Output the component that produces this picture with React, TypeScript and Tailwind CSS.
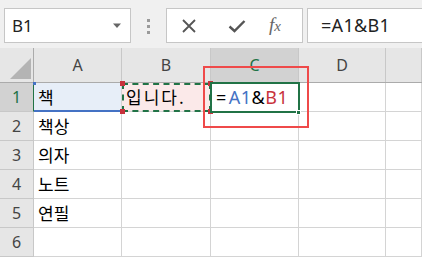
import { memo } from "react";

const font = { fontFamily: '"Noto Sans", "Noto Sans CJK KR", sans-serif' };
const kr = { fontFamily: '"Noto Sans CJK KR", "Noto Sans", sans-serif' };

const cols = ["A", "B", "C", "D", ""];
const colW = ["w-[88px]", "w-[89px]", "w-[88px]", "w-[87px]", "w-[36px]"];
const data: string[][] = [
  ["책", "입니다.", "", "", ""],
  ["책상", "", "", "", ""],
  ["의자", "", "", "", ""],
  ["노트", "", "", "", ""],
  ["연필", "", "", "", ""],
  ["", "", "", "", ""],
];

const Toolbar = () => (
  <div className="flex h-[48px] items-start bg-[#f0f0f0] pt-[8px]">
    <div className="ml-[4px] flex h-[35px] w-[127px] items-center justify-between border border-[#c6c6c6] bg-white pl-[7px] pr-[8px]">
      <span className="text-[17px] text-[#222]" style={font}>B1</span>
      <svg width="10" height="6" viewBox="0 0 10 6"><path d="M1 0.5h8L5 5z" fill="#666" /></svg>
    </div>
    <div className="ml-[16px] mt-[11px] flex flex-col gap-[3px]">
      <div className="h-[3px] w-[3px] bg-[#9a9a9a]" />
      <div className="h-[3px] w-[3px] bg-[#9a9a9a]" />
      <div className="h-[3px] w-[3px] bg-[#9a9a9a]" />
    </div>
    <div className="ml-[16px] flex h-[35px] w-[137px] items-center border border-[#c6c6c6] bg-white">
      <svg className="ml-[14px]" width="16" height="16" viewBox="0 0 16 16">
        <path d="M2 2L14 14M14 2L2 14" stroke="#555" strokeWidth="1.8" />
      </svg>
      <svg className="ml-[31px]" width="18" height="14" viewBox="0 0 18 14">
        <path d="M1.5 7.5L6.5 12L16.5 2" stroke="#555" strokeWidth="2.4" fill="none" />
      </svg>
      <span className="ml-[23px] text-[19px] italic text-[#666]" style={{ fontFamily: '"Liberation Serif", serif' }}>
        f<span className="text-[15px]">x</span>
      </span>
    </div>
    <div className="ml-[4px] flex h-[35px] flex-1 items-center border border-r-0 border-[#c6c6c6] bg-white pl-[13px]">
      <span className="text-[18px] tracking-[0.3px] text-[#222]" style={font}>=A1&amp;B1</span>
    </div>
  </div>
);

const Grid = () => (
  <div className="relative">
    <div className="flex h-[35px] border-b border-[#ababab] bg-[#e6e6e6]">
      <div className="flex w-[34px] items-end justify-end border-r border-[#ababab] pb-[3px] pr-[2px]">
        <svg width="21" height="21" viewBox="0 0 21 21"><path d="M21 0V21H0z" fill="#b4b4b4" /></svg>
      </div>
      {cols.map((c, i) => (
        <div
          key={i}
          className={`${colW[i]} flex items-center justify-center border-r border-[#c8c8c8] text-[16px] ${c === "C" ? "bg-[#d2d2d2] text-[#217346]" : "text-[#444]"}`}
          style={font}
        >
          {c}
        </div>
      ))}
    </div>
    {data.map((row, r) => (
      <div key={r} className="flex h-[29px]">
        <div
          className={`flex w-[34px] items-center justify-center border-b border-r text-[16px] ${r === 0 ? "border-r-[#217346] border-b-[#c8c8c8] bg-[#d2d2d2] text-[#217346]" : "border-[#c8c8c8] bg-[#e6e6e6] text-[#444]"}`}
          style={font}
        >
          {r + 1}
        </div>
        {row.map((v, i) => (
          <div
            key={i}
            className={`${colW[i]} flex items-center border-b border-r border-[#d4d4d4] pl-[4px] text-[17px] text-black ${r === 0 && i === 0 ? "bg-[#e7eef8]" : ""} ${r === 0 && i === 1 ? "bg-[#fbe9e9] tracking-[2px]" : ""}`}
            style={kr}
          >
            {v}
          </div>
        ))}
      </div>
    ))}

    {/* A1 reference highlight */}
    <div className="absolute left-[34px] top-[62px] h-[2px] w-[88px] bg-[#4472c4]" />
    <div className="absolute left-[33px] top-[34px] h-[3px] w-[3px] bg-[#4472c4]" />

    {/* B1 copy marquee */}
    <div className="absolute left-[122px] top-[35px] h-[29px] w-[89px] border-2 border-dashed border-[#217346]" />
    {[
      "left-[120px] top-[33px]",
      "left-[208px] top-[33px]",
      "left-[120px] top-[61px]",
      "left-[208px] top-[61px]",
    ].map((p) => (
      <div key={p} className={`absolute ${p} h-[5px] w-[5px] bg-[#c8323c]`} />
    ))}

    {/* C1 active cell */}
    <div className="absolute left-[210px] top-[34px] flex h-[31px] w-[90px] items-center border-2 border-[#217346] bg-white pl-[4px] text-[18px] tracking-[0.5px]" style={font}>
      <span className="mr-[2px] text-black">=</span>
      <span className="text-[#4472c4]">A1</span>
      <span className="text-black">&amp;</span>
      <span className="text-[#c8323c]">B1</span>
    </div>
    <div className="absolute left-[296px] top-[62px] h-[5px] w-[5px] border border-white bg-[#217346]" />

    {/* annotation box */}
    <div className="absolute left-[203px] top-[18px] h-[62px] w-[106px] border-2 border-[#ef4a4a]" />
  </div>
);

const App = memo(() => (
  <div className="h-[257px] w-[422px] overflow-hidden bg-white">
    <Toolbar />
    <Grid />
  </div>
));

App.displayName = "App";
export default App;
